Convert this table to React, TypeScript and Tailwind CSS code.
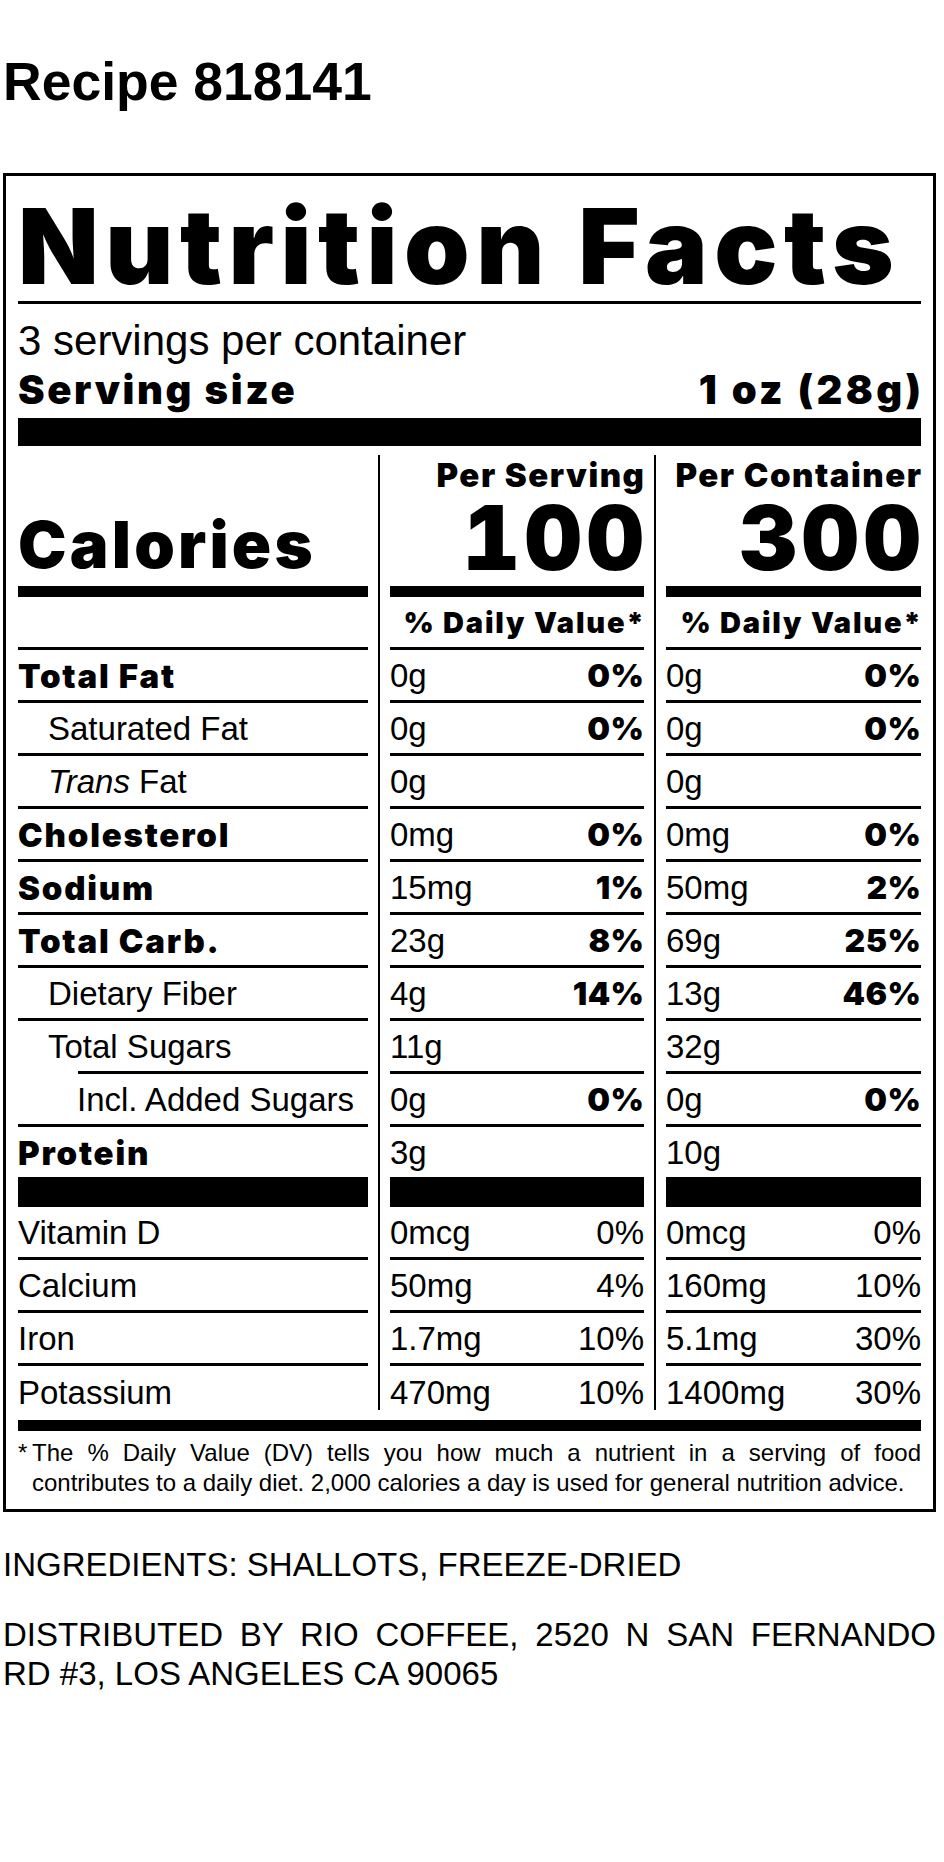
import React from 'react';

const heavy = "font-['Inter',sans-serif] font-black";
const plain = "font-['Liberation_Sans',Arial,sans-serif]";

type Row = {
  label: React.ReactNode;
  indent?: 0 | 1 | 2;
  bold?: boolean;
  s: string;
  sp?: string;
  c: string;
  cp?: string;
  pctPlain?: boolean;
  ruleIndent?: boolean;
  bar?: boolean;
  last?: boolean;
};

const rows: Row[] = [
  { label: 'Total Fat', bold: true, s: '0g', sp: '0%', c: '0g', cp: '0%' },
  { label: 'Saturated Fat', indent: 1, s: '0g', sp: '0%', c: '0g', cp: '0%' },
  {
    label: (
      <>
        <i>Trans</i> Fat
      </>
    ),
    indent: 1,
    s: '0g',
    c: '0g',
  },
  { label: 'Cholesterol', bold: true, s: '0mg', sp: '0%', c: '0mg', cp: '0%' },
  { label: 'Sodium', bold: true, s: '15mg', sp: '1%', c: '50mg', cp: '2%' },
  { label: 'Total Carb.', bold: true, s: '23g', sp: '8%', c: '69g', cp: '25%' },
  { label: 'Dietary Fiber', indent: 1, s: '4g', sp: '14%', c: '13g', cp: '46%' },
  { label: 'Total Sugars', indent: 1, s: '11g', c: '32g', ruleIndent: true },
  { label: 'Incl. Added Sugars', indent: 2, s: '0g', sp: '0%', c: '0g', cp: '0%' },
  { label: 'Protein', bold: true, s: '3g', c: '10g', bar: true },
  { label: 'Vitamin D', s: '0mcg', sp: '0%', c: '0mcg', cp: '0%', pctPlain: true },
  { label: 'Calcium', s: '50mg', sp: '4%', c: '160mg', cp: '10%', pctPlain: true },
  { label: 'Iron', s: '1.7mg', sp: '10%', c: '5.1mg', cp: '30%', pctPlain: true },
  { label: 'Potassium', s: '470mg', sp: '10%', c: '1400mg', cp: '30%', pctPlain: true, last: true },
];

// one row cell: text area + the rule under it
const Cell: React.FC<{ row: Row; children: React.ReactNode; first?: boolean }> = ({ row, children, first }) => (
  <div>
    <div
      className={`${
        row.last ? 'h-[44px] items-start' : 'h-[50px] items-center'
      } flex pt-[2px] text-[33px] leading-[50px] whitespace-nowrap`}
    >
      {children}
    </div>
    {!row.last &&
      (row.bar ? (
        <div className="h-[30px] bg-black" />
      ) : (
        <div className={`h-[3px] bg-black ${first && row.ruleIndent ? 'ml-[60px]' : ''}`} />
      ))}
  </div>
);

const ValueColumn: React.FC<{ title: string; calories: string; side: 's' | 'c' }> = ({ title, calories, side }) => (
  <div className="border-l-2 border-black pl-[10px]">
    <div className="h-[131px] flex flex-col items-end">
      <div className={`${heavy} text-[33px] leading-[40px] tracking-[1.5px] -mr-[1.5px]`}>{title}</div>
      <div className={`${heavy} text-[89px] leading-[85px] tabular-nums tracking-[4.7px] -mr-[4.7px]`}>
        {calories}
      </div>
    </div>
    <div className="h-[11px] bg-black" />
    <div>
      <div className="h-[50px] flex items-center justify-end pt-[2px]">
        <span className={`${heavy} text-[29px] leading-[50px] tracking-[1.8px] -mr-[1.8px]`}>% Daily Value*</span>
      </div>
      <div className="h-[3px] bg-black" />
    </div>
    {rows.map((r, i) => {
      const amount = side === 's' ? r.s : r.c;
      const pct = side === 's' ? r.sp : r.cp;
      return (
        <Cell key={i} row={r}>
          <div className="flex w-full justify-between">
            <span className={plain}>{amount}</span>
            {pct && (
              <span className={r.pctPlain ? plain : `${heavy} text-[32px] tracking-[0.5px] -mr-[0.5px]`}>{pct}</span>
            )}
          </div>
        </Cell>
      );
    })}
  </div>
);

export default function App() {
  return (
    <div className={`min-h-screen bg-white text-black ${plain}`}>
      <div className="w-[933px] ml-[3px] pt-[52px] pb-[40px]">
        <h1 className="text-[53.5px] leading-[60px] font-bold">Recipe 818141</h1>

        <div className="mt-[61px] border-[3px] border-black px-[12px] pb-[11px]">
          <h2 className={`${heavy} pt-[17px] text-[105px] leading-[105px] tracking-[6.5px] whitespace-nowrap`}>
            Nutrition Facts
          </h2>
          <div className="mt-[3px] h-[3px] bg-black" />

          <div className="pt-[13px]">
            <p className="text-[42px] leading-[48px]">3 servings per container</p>
            <div className={`${heavy} mt-[1px] flex justify-between text-[40px] leading-[48px]`}>
              <span className="tracking-[2.6px]">Serving size</span>
              <span className="tracking-[3.4px] -mr-[3.4px]">1 oz (28g)</span>
            </div>
          </div>
          <div className="mt-[4px] h-[28px] bg-black" />

          <div className="mt-[9px] flex">
            {/* nutrient names */}
            <div className="w-[360px] pr-[10px]">
              <div className="h-[131px] flex flex-col justify-end pb-[9px]">
                <div className={`${heavy} text-[65px] leading-[65px] tracking-[3.2px]`}>Calories</div>
              </div>
              <div className="h-[11px] bg-black" />
              <div>
                <div className="h-[50px]" />
                <div className="h-[3px] bg-black" />
              </div>
              {rows.map((r, i) => (
                <Cell key={i} row={r} first>
                  <span
                    className={`${r.bold ? `${heavy} tracking-[1.8px]` : plain} ${
                      r.indent === 1 ? 'pl-[30px]' : r.indent === 2 ? 'pl-[59px]' : ''
                    }`}
                  >
                    {r.label}
                  </span>
                </Cell>
              ))}
            </div>

            <div className="w-[276px] pr-[10px]">
              <ValueColumn title="Per Serving" calories="100" side="s" />
            </div>
            <div className="w-[267px]">
              <ValueColumn title="Per Container" calories="300" side="c" />
            </div>
          </div>

          <div className="mt-[10px] h-[11px] bg-black" />

          <div className="mt-[7px] flex text-[24px] leading-[30px]">
            <span className="w-[14px] shrink-0">*</span>
            <p className="flex-1 text-justify">
              The % Daily Value (DV) tells you how much a nutrient in a serving of food contributes to a daily diet.
              2,000 calories a day is used for general nutrition advice.
            </p>
          </div>
        </div>

        <p className="mt-[33px] text-[33px] leading-[39px]">INGREDIENTS: SHALLOTS, FREEZE-DRIED</p>
        <p className="mt-[31px] text-[33px] leading-[39px] text-justify">
          DISTRIBUTED BY RIO COFFEE, 2520 N SAN FERNANDO RD #3, LOS ANGELES CA 90065
        </p>
      </div>
    </div>
  );
}
